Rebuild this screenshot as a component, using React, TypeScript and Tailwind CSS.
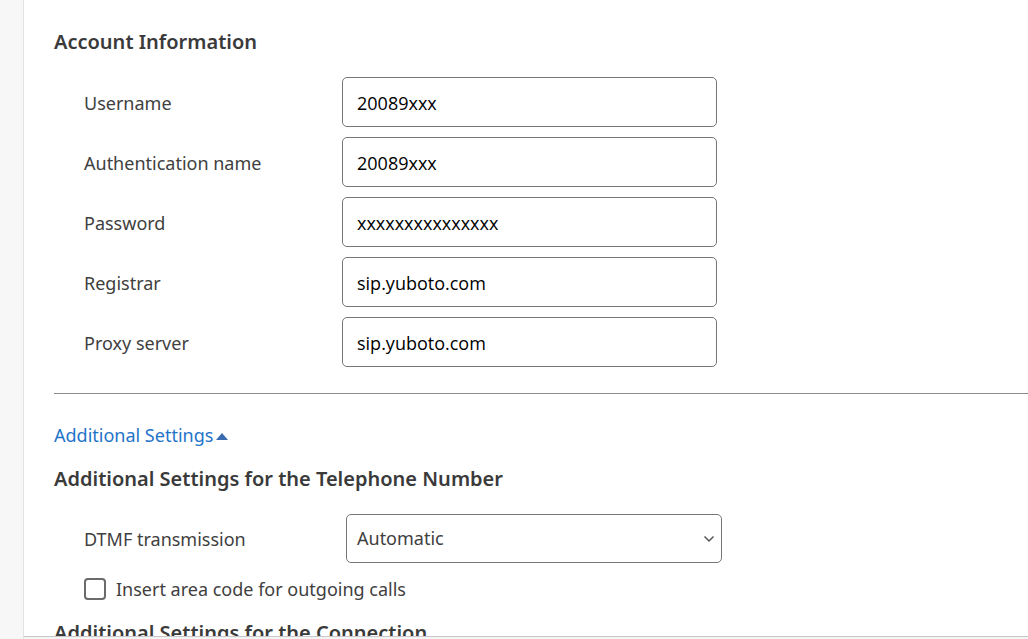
import React from 'react';

const rows = [
  { label: 'Username', value: '20089xxx' },
  { label: 'Authentication name', value: '20089xxx' },
  { label: 'Password', value: 'xxxxxxxxxxxxxxx' },
  { label: 'Registrar', value: 'sip.yuboto.com' },
  { label: 'Proxy server', value: 'sip.yuboto.com' },
];

export default function App() {
  return (
    <div className="flex h-[639px] w-full overflow-hidden bg-white font-['Noto_Sans','Open_Sans',sans-serif] text-[#404040]">
      {/* left rail */}
      <div className="w-[24px] shrink-0 border-r border-[#e3e3e3] bg-[#f7f7f7]" />

      <div className="flex min-w-0 flex-1 flex-col">
        <div className="flex-1 overflow-hidden pl-[30px] pt-[29px]">
          <h2 className="text-[20px] font-semibold leading-[26px] text-[#3a3a3a]">Account Information</h2>

          <div className="mt-[22px] flex flex-col gap-[10px] pl-[30px]">
            {rows.map((r) => (
              <div key={r.label} className="flex items-center">
                <label className="w-[258px] shrink-0 pt-[1px] text-[18px] leading-[24px]">{r.label}</label>
                <input
                  readOnly
                  value={r.value}
                  className="h-[50px] w-[375px] rounded-[5px] border border-[#767676] px-[14px] pt-[1px] font-['Open_Sans',sans-serif] text-[18px] text-black outline-none"
                />
              </div>
            ))}
          </div>

          <div className="mt-[26px] border-t border-[#8c8c8c]" />

          <button className="mt-[29px] flex items-center gap-[3px] text-[18px] leading-[24px] text-[#1f74c8]">
            Additional Settings
            <svg width="12" height="8" viewBox="0 0 12 8" className="mt-[1px]">
              <path d="M0 8 L6 1 L12 8 Z" fill="#3a6bb0" />
            </svg>
          </button>

          <h2 className="mt-[19px] text-[20px] font-semibold leading-[26px] text-[#3a3a3a]">
            Additional Settings for the Telephone Number
          </h2>

          <div className="mt-[22px] flex items-center pl-[30px]">
            <label className="w-[262px] shrink-0 text-[18px] leading-[24px]">DTMF transmission</label>
            <div className="relative h-[49px] w-[376px] rounded-[5px] border border-[#767676]">
              <div className="flex h-full items-center px-[10px] text-[18px] text-[#404040]">Automatic</div>
              <svg width="12" height="8" viewBox="0 0 12 8" className="absolute right-[6px] top-[20px]">
                <path d="M1.5 1.5 L6 6 L10.5 1.5" fill="none" stroke="#555" strokeWidth="1.5" />
              </svg>
            </div>
          </div>

          <div className="mt-[14px] flex items-center gap-[10px] pl-[30px]">
            <span className="h-[22px] w-[22px] rounded-[4px] border-2 border-[#6b6b6b] bg-white" />
            <span className="text-[18px] leading-[24px]">Insert area code for outgoing calls</span>
          </div>

          <h2 className="mt-[19px] text-[20px] font-semibold leading-[26px] text-[#3a3a3a]">
            Additional Settings for the Connection
          </h2>
        </div>
        <div className="h-[3px] shrink-0 border-t border-[#c8c8c8] bg-[#f4f4f4]" />
      </div>
    </div>
  );
}
